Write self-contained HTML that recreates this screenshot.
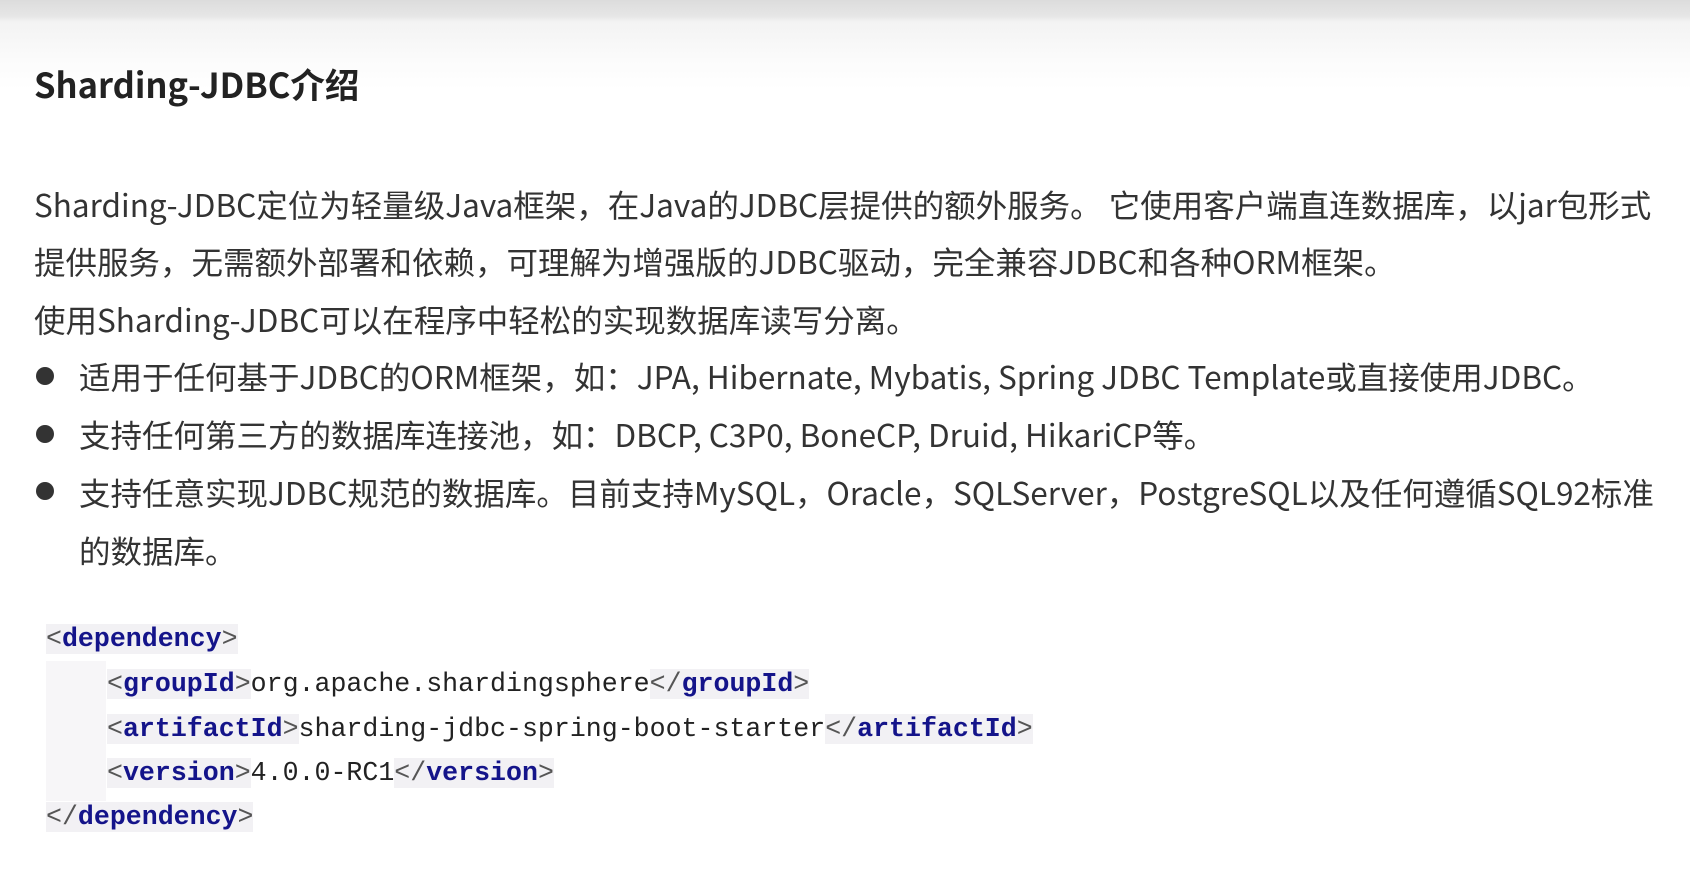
<!DOCTYPE html>
<html><head><meta charset="utf-8"><style>
html,body{margin:0;padding:0;}
body{width:1690px;height:873px;position:relative;overflow:hidden;background:#fff;
background:linear-gradient(#dcdcdc 0px,#e6e6e6 16px,#f3f3f3 22px,#fbfbfb 60px,#fff 90px);}
.t{position:absolute;white-space:nowrap;font-family:"Noto Sans CJK SC","Liberation Sans",sans-serif;color:#333;font-size:31.5px;line-height:40px;}
h1{position:absolute;left:34px;top:61px;margin:0;font-family:"Noto Sans CJK SC","Liberation Sans",sans-serif;font-size:34.5px;font-weight:bold;color:#222;line-height:44px;white-space:nowrap;}
.b{position:absolute;left:36px;width:18px;height:18px;border-radius:50%;background:#333;}
.c{position:absolute;white-space:pre;font-family:"Liberation Mono",monospace;font-size:26.6px;line-height:40px;color:#222;}
.g{background:#f2f1f4;}
.n{color:#14148a;font-weight:bold;}
.k{color:#555;}
</style></head><body>
<h1>Sharding-JDBC介绍</h1>
<div class="t" style="left:34px;top:184px">Sharding-JDBC定位为轻量级Java框架，在Java的JDBC层提供的额外服务。 它使用客户端直连数据库，以jar包形式</div>
<div class="t" style="left:34px;top:241px">提供服务，无需额外部署和依赖，可理解为增强版的JDBC驱动，完全兼容JDBC和各种ORM框架。</div>
<div class="t" style="left:34px;top:299px">使用Sharding-JDBC可以在程序中轻松的实现数据库读写分离。</div>
<div class="b" style="top:367px"></div>
<div class="t" style="left:79px;top:356px">适用于任何基于JDBC的ORM框架，如：JPA, Hibernate, Mybatis, Spring JDBC Template或直接使用JDBC。</div>
<div class="b" style="top:425px"></div>
<div class="t" style="left:79px;top:414px">支持任何第三方的数据库连接池，如：DBCP, C3P0, BoneCP, Druid, HikariCP等。</div>
<div class="b" style="top:482px"></div>
<div class="t" style="left:79px;top:472px">支持任意实现JDBC规范的数据库。目前支持MySQL，Oracle，SQLServer，PostgreSQL以及任何遵循SQL92标准</div>
<div class="t" style="left:79px;top:530px">的数据库。</div>
<div style="position:absolute;left:46px;top:661px;width:60px;height:140px;background:#f7f6f8"></div>
<div class="c" style="left:46px;top:619px"><span class="g"><span class="k">&lt;</span><span class="n">dependency</span><span class="k">&gt;</span></span></div>
<div class="c" style="left:107px;top:664px"><span class="g"><span class="k">&lt;</span><span class="n">groupId</span><span class="k">&gt;</span></span>org.apache.shardingsphere<span class="g"><span class="k">&lt;/</span><span class="n">groupId</span><span class="k">&gt;</span></span></div>
<div class="c" style="left:107px;top:709px"><span class="g"><span class="k">&lt;</span><span class="n">artifactId</span><span class="k">&gt;</span></span>sharding-jdbc-spring-boot-starter<span class="g"><span class="k">&lt;/</span><span class="n">artifactId</span><span class="k">&gt;</span></span></div>
<div class="c" style="left:107px;top:753px"><span class="g"><span class="k">&lt;</span><span class="n">version</span><span class="k">&gt;</span></span>4.0.0-RC1<span class="g"><span class="k">&lt;/</span><span class="n">version</span><span class="k">&gt;</span></span></div>
<div class="c" style="left:46px;top:797px"><span class="g"><span class="k">&lt;/</span><span class="n">dependency</span><span class="k">&gt;</span></span></div>
</body></html>
